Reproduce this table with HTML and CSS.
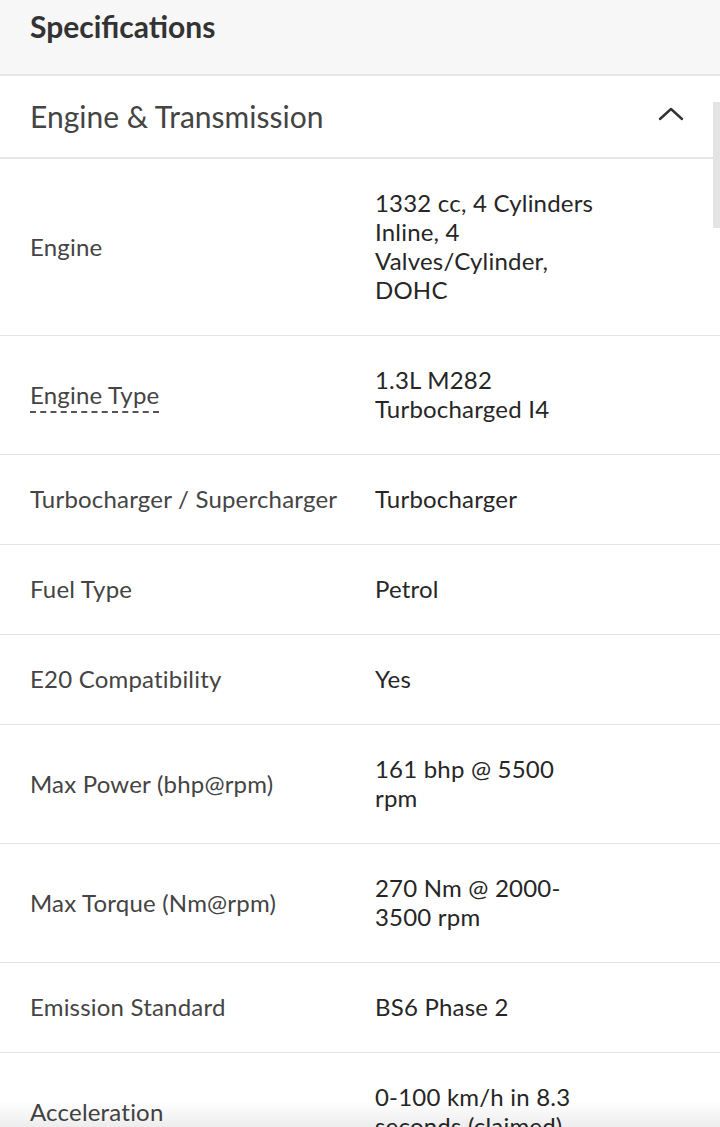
FILE: index.html
```html
<!DOCTYPE html>
<html>
    <head>
        <meta name="viewport" content="width=device-width, initial-scale=1.0">
        <title>specifications</title>
        <link rel="stylesheet" href="styles.css">
    </head>
    <body>
        <div class="page">
            <div class="heading">
                <h2>Specifications</h2>
            </div>

            <div class="section">
                <div class="section-head">
                    <h3>Engine &amp; Transmission</h3>
                    <svg class="chevron" width="26" height="16" viewBox="0 0 26 16">
                        <path d="M2 13 L13 3 L24 13" fill="none" stroke="#333" stroke-width="2.4" stroke-linecap="round" stroke-linejoin="round"/>
                    </svg>
                </div>
                <div class="scrollthumb"></div>

                <div class="row">
                    <p class="label">Engine</p>
                    <p class="value">1332 cc, 4 Cylinders Inline, 4 Valves/Cylinder, DOHC</p>
                </div>
                <div class="row">
                    <p class="label"><span class="hint">Engine Type</span></p>
                    <p class="value">1.3L M282 Turbocharged I4</p>
                </div>
                <div class="row">
                    <p class="label">Turbocharger / Supercharger</p>
                    <p class="value">Turbocharger</p>
                </div>
                <div class="row">
                    <p class="label">Fuel Type</p>
                    <p class="value">Petrol</p>
                </div>
                <div class="row">
                    <p class="label">E20 Compatibility</p>
                    <p class="value">Yes</p>
                </div>
                <div class="row">
                    <p class="label">Max Power (bhp@rpm)</p>
                    <p class="value">161 bhp @ 5500 rpm</p>
                </div>
                <div class="row">
                    <p class="label">Max Torque (Nm@rpm)</p>
                    <p class="value">270 Nm @ 2000-3500 rpm</p>
                </div>
                <div class="row">
                    <p class="label">Emission Standard</p>
                    <p class="value">BS6 Phase 2</p>
                </div>
                <div class="row">
                    <p class="label">Acceleration</p>
                    <p class="value">0-100 km/h in 8.3 seconds (claimed)</p>
                </div>
            </div>
        </div>
        <div class="bottomshade"></div>
    </body>
</html>
```

FILE: styles.css
```css
*{
    margin: 0;
    padding: 0;
    box-sizing: border-box;
    font-family: Lato, "Open Sans", sans-serif;
}
body{
    background-color: #fff;
    overflow: hidden;
}
.page{
    width: 720px;
}
.heading{
    background-color: #f7f7f7;
    height: 76px;
    padding: 9px 30px 0;
    border-bottom: 2px solid #e6e6e6;
}
.heading h2{
    font-size: 30px;
    font-weight: 700;
    color: #333;
    line-height: 34px;
}
.section{
    position: relative;
}
.section-head{
    display: flex;
    justify-content: space-between;
    align-items: center;
    height: 83px;
    padding: 0 36px 0 30px;
    border-bottom: 2px solid #e6e6e6;
}
.section-head h3{
    font-size: 30px;
    font-weight: 400;
    color: #444;
    padding-bottom: 2px;
}
.chevron{
    margin-bottom: 6px;
}
.scrollthumb{
    position: absolute;
    right: 0;
    top: 26px;
    width: 7px;
    height: 126px;
    background-color: #e4e4e4;
}
.row{
    display: flex;
    align-items: center;
    padding: 29px 30px 31px;
    border-bottom: 1px solid #e3e3e3;
}
.row p{
    font-size: 24px;
    line-height: 29px;
    letter-spacing: 0.2px;
}
.label{
    width: 345px;
    color: #444;
}
.value{
    width: 222px;
    color: #262626;
}
.hint{
    border-bottom: 2px dashed #555;
    padding-bottom: 2px;
}
.bottomshade{
    position: fixed;
    left: 0;
    right: 0;
    bottom: 0;
    height: 26px;
    background: linear-gradient(rgba(0,0,0,0), rgba(0,0,0,0.07));
}
```
